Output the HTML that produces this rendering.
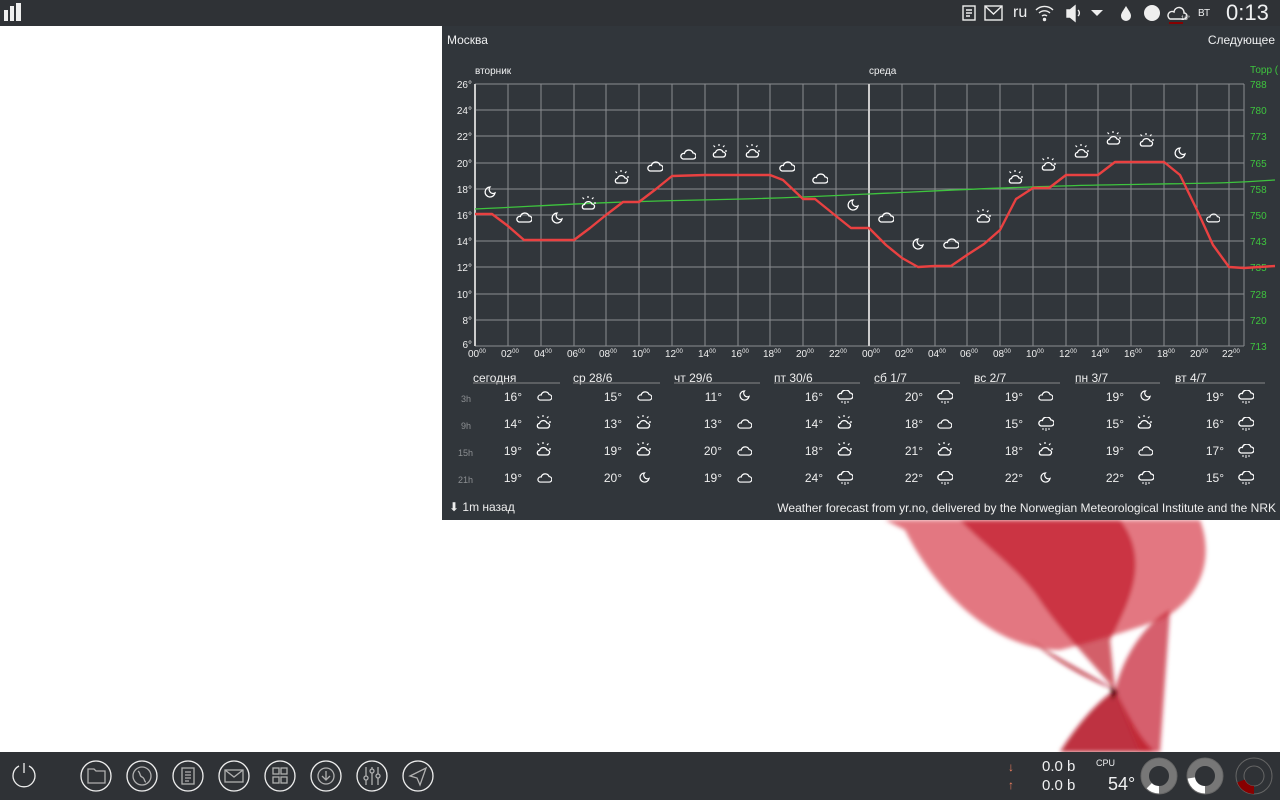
<!DOCTYPE html>
<html><head><meta charset="utf-8">
<style>
*{margin:0;padding:0;box-sizing:border-box}
body{width:1280px;height:800px;overflow:hidden;background:#fff;font-family:"Liberation Sans","DejaVu Sans",sans-serif;position:relative;color:#eff0f1}
.bar{position:absolute;left:0;width:1280px;background:#2f3236}
#top{top:0;height:26px}
#bot{top:752px;height:48px}
#panel{position:absolute;left:442px;top:26px;width:838px;height:494px;background:#31363b}
.t{position:absolute;white-space:nowrap}
</style></head><body>
<svg width="1280" height="800" style="position:absolute;left:0;top:0">
 <defs><filter id="bl"><feGaussianBlur stdDeviation="2"/></filter></defs>
 <g filter="url(#bl)">
  <path d="M885 520L1200 520C1215 560 1200 600 1160 620C1130 630 1100 640 1060 650C1000 650 940 600 905 530Z" fill="#d94a55" opacity=".75"/>
  <path d="M960 520L1120 520C1150 560 1130 600 1110 640L1115 690C1090 660 1060 630 1040 600C1020 570 990 550 960 520Z" fill="#c01a2a" opacity=".7"/>
  <path d="M1030 640C1060 660 1100 680 1115 690C1130 720 1140 740 1155 752L1060 752C1080 720 1100 700 1115 690C1090 680 1060 665 1030 640Z" fill="#b3111f" opacity=".85"/>
  <path d="M1115 690C1125 650 1150 620 1170 610L1160 752L1140 752Z" fill="#c52030" opacity=".7"/>
  <path d="M1110 685L1118 692L1112 700Z" fill="#300" opacity=".8"/>
 </g>
</svg>

<div id="top" class="bar">
 <svg width="20" height="20" style="position:absolute;left:3px;top:3px"><rect x="1" y="7" width="4" height="11" fill="#eee"/><rect x="7" y="3" width="4" height="15" fill="#eee"/><rect x="13" y="0" width="5" height="18" fill="#eee"/></svg>
 <svg width="260" height="26" style="position:absolute;left:960px;top:0" fill="none" stroke="#eee" stroke-width="1.4">
  <rect x="3" y="6" width="12" height="14"/><path d="M6 10h6M6 13h6M6 16h4"/>
  <rect x="25" y="6" width="17" height="14"/><path d="M25 6l8.5 8 8.5-8"/>
  <path d="M76 10a12 12 0 0 1 17 0M79 13a8 8 0 0 1 11 0M82 16a4 4 0 0 1 5 0"/><circle cx="84.5" cy="19.5" r="1" fill="#eee"/>
  <path d="M107 10h3l5-4v15l-5-4h-3z" fill="#eee"/><path d="M118 10a4 4 0 0 1 0 6"/>
  <path d="M131 10h12l-6 6z" fill="#eee" stroke="none"/>
  <path d="M166 6c-3 5-5 7-5 10a5 5 0 0 0 10 0c0-3-2-5-5-10z" fill="#eee" stroke="none"/>
  <circle cx="192" cy="13" r="8" fill="#eee" stroke="none"/>
  <path d="M210 19h14a3 3 0 0 0 0-6a5 5 0 0 0-10-1a4 4 0 0 0-4 7z"/>
  <rect x="209" y="22" width="14" height="2" fill="#800" stroke="none"/>
 </svg>
 <div class="t" style="left:1013px;top:4px;font-size:16px">ru</div>
 <div class="t" style="left:1181px;top:16px;font-size:6px">16°</div>
 <div class="t" style="left:1198px;top:8px;font-size:10px">ВТ</div>
 <div class="t" style="left:1226px;top:0px;font-size:22px;font-weight:300">0:13</div>
</div>

<div id="panel">
 <div class="t" style="left:5px;top:7px;font-size:12px">Москва</div>
 <div class="t" style="right:5px;top:7px;font-size:12px">Следующее</div>
 <div class="t" style="left:33px;top:40px;font-size:10px">вторник</div>
 <div class="t" style="left:427px;top:40px;font-size:10px">среда</div>
 <div class="t" style="left:808px;top:39px;font-size:10px;color:#3ec43e">Торр (</div>
</div>

<svg width="1280" height="800" style="position:absolute;left:0;top:0" font-family="Liberation Sans,sans-serif">
 <g stroke="#8a8d90" stroke-width="1">
  <path d="M475 84H1244M475 110H1244M475 136H1244M475 163H1244M475 189H1244M475 215H1244M475 241H1244M475 267H1244M475 294H1244M475 320H1244M475 346H1244"/>
  <path d="M508 84V346M541 84V346M574 84V346M606 84V346M639 84V346M672 84V346M705 84V346M738 84V346M770 84V346M803 84V346M836 84V346M902 84V346M935 84V346M967 84V346M1000 84V346M1033 84V346M1066 84V346M1098 84V346M1131 84V346M1164 84V346M1197 84V346M1229 84V346M1244 84V346"/>
 </g>
 <path d="M475 84V346M869 84V346" stroke="#ccc" stroke-width="2"/>
 <g font-size="10" fill="#eee" text-anchor="end">
  <text x="472" y="88">26°</text><text x="472" y="114">24°</text><text x="472" y="140">22°</text><text x="472" y="167">20°</text><text x="472" y="193">18°</text><text x="472" y="219">16°</text><text x="472" y="245">14°</text><text x="472" y="271">12°</text><text x="472" y="298">10°</text><text x="472" y="324">8°</text><text x="472" y="348">6°</text>
 </g>
 <g font-size="10" fill="#3ec43e">
  <text x="1250" y="88">788</text><text x="1250" y="114">780</text><text x="1250" y="140">773</text><text x="1250" y="167">765</text><text x="1250" y="193">758</text><text x="1250" y="219">750</text><text x="1250" y="245">743</text><text x="1250" y="271">735</text><text x="1250" y="298">728</text><text x="1250" y="324">720</text><text x="1250" y="350">713</text>
 </g>
 <g font-size="10" fill="#eee">
  <text x="468" y="357">00<tspan font-size="6" dy="-4">00</tspan></text><text x="501" y="357">02<tspan font-size="6" dy="-4">00</tspan></text><text x="534" y="357">04<tspan font-size="6" dy="-4">00</tspan></text><text x="567" y="357">06<tspan font-size="6" dy="-4">00</tspan></text><text x="599" y="357">08<tspan font-size="6" dy="-4">00</tspan></text><text x="632" y="357">10<tspan font-size="6" dy="-4">00</tspan></text><text x="665" y="357">12<tspan font-size="6" dy="-4">00</tspan></text><text x="698" y="357">14<tspan font-size="6" dy="-4">00</tspan></text><text x="731" y="357">16<tspan font-size="6" dy="-4">00</tspan></text><text x="763" y="357">18<tspan font-size="6" dy="-4">00</tspan></text><text x="796" y="357">20<tspan font-size="6" dy="-4">00</tspan></text><text x="829" y="357">22<tspan font-size="6" dy="-4">00</tspan></text>
  <text x="862" y="357">00<tspan font-size="6" dy="-4">00</tspan></text><text x="895" y="357">02<tspan font-size="6" dy="-4">00</tspan></text><text x="928" y="357">04<tspan font-size="6" dy="-4">00</tspan></text><text x="960" y="357">06<tspan font-size="6" dy="-4">00</tspan></text><text x="993" y="357">08<tspan font-size="6" dy="-4">00</tspan></text><text x="1026" y="357">10<tspan font-size="6" dy="-4">00</tspan></text><text x="1059" y="357">12<tspan font-size="6" dy="-4">00</tspan></text><text x="1091" y="357">14<tspan font-size="6" dy="-4">00</tspan></text><text x="1124" y="357">16<tspan font-size="6" dy="-4">00</tspan></text><text x="1157" y="357">18<tspan font-size="6" dy="-4">00</tspan></text><text x="1190" y="357">20<tspan font-size="6" dy="-4">00</tspan></text><text x="1222" y="357">22<tspan font-size="6" dy="-4">00</tspan></text>
 </g>
 <path d="M475 209C560 205 600 202 700 200S820 196 869 194S1000 187 1100 185S1220 184 1275 180" fill="none" stroke="#3ec43e" stroke-width="1.3"/>
 <path d="M475 214L492 214L508 226L524 240L541 240L557 240L574 240L590 228L606 215L623 202L639 202L656 189L672 176L705 175L770 175L783 180L803 199L815 199L836 216L851 228L869 228L886 245L902 258L918 267L935 266L951 266L967 255L984 244L1000 230L1016 199L1033 188L1049 188L1066 175L1098 175L1115 162L1164 162L1180 175L1197 210L1213 245L1229 267L1244 268L1275 266" fill="none" stroke="#e94141" stroke-width="2.4" stroke-linejoin="round"/>
 <defs>
  <symbol id="cl" viewBox="0 0 16 12"><path d="M3 11h10a3 3 0 0 0 0-6a4.5 4.5 0 0 0-8.6 0.5A2.8 2.8 0 0 0 3 11z" fill="none" stroke="#fff" stroke-width="1.3"/></symbol>
  <symbol id="ps" viewBox="0 0 16 14"><path d="M7 2V0M11 3l1.5-1.5M13 7h2M3 3L1.5 1.5" stroke="#fff" stroke-width="1.2"/><path d="M3 13h8a2.5 2.5 0 0 0 0-5a4 4 0 0 0-7.5 0.5A2.3 2.3 0 0 0 3 13z" fill="none" stroke="#fff" stroke-width="1.3"/></symbol>
  <symbol id="mn" viewBox="0 0 12 12"><path d="M6 1a5 5 0 1 0 5 6a4 4 0 0 1-5-6z" fill="none" stroke="#fff" stroke-width="1.3"/></symbol>
  <symbol id="rn" viewBox="0 0 16 14"><path d="M3 9h10a3 3 0 0 0 0-6a4.5 4.5 0 0 0-8.6 0.5A2.8 2.8 0 0 0 3 9z" fill="none" stroke="#fff" stroke-width="1.3"/><path d="M5 11v2M8 11v3M11 11v2" stroke="#fff" stroke-width="1"/></symbol>
 </defs>
 <use href="#mn" x="484" y="186" width="12" height="12"/>
 <use href="#cl" x="516" y="211" width="16" height="12"/>
 <use href="#mn" x="551" y="212" width="12" height="12"/>
 <use href="#ps" x="581" y="196" width="16" height="14"/>
 <use href="#ps" x="614" y="170" width="16" height="14"/>
 <use href="#cl" x="647" y="160" width="16" height="12"/>
 <use href="#cl" x="680" y="148" width="16" height="12"/>
 <use href="#ps" x="712" y="144" width="16" height="14"/>
 <use href="#ps" x="745" y="144" width="16" height="14"/>
 <use href="#cl" x="779" y="160" width="16" height="12"/>
 <use href="#cl" x="812" y="172" width="16" height="12"/>
 <use href="#mn" x="847" y="199" width="12" height="12"/>
 <use href="#cl" x="878" y="211" width="16" height="12"/>
 <use href="#mn" x="912" y="238" width="12" height="12"/>
 <use href="#cl" x="943" y="237" width="16" height="12"/>
 <use href="#ps" x="976" y="209" width="16" height="14"/>
 <use href="#ps" x="1008" y="170" width="16" height="14"/>
 <use href="#ps" x="1041" y="157" width="16" height="14"/>
 <use href="#ps" x="1074" y="144" width="16" height="14"/>
 <use href="#ps" x="1106" y="131" width="16" height="14"/>
 <use href="#ps" x="1139" y="133" width="16" height="14"/>
 <use href="#mn" x="1174" y="147" width="12" height="12"/>
 <use href="#cl" x="1206" y="212" width="14" height="11"/>

 <g font-size="12" fill="#eee">
  <text x="473" y="382">сегодня</text><text x="573" y="382">ср 28/6</text><text x="674" y="382">чт 29/6</text><text x="774" y="382">пт 30/6</text><text x="874" y="382">сб 1/7</text><text x="974" y="382">вс 2/7</text><text x="1075" y="382">пн 3/7</text><text x="1175" y="382">вт 4/7</text>
 </g>
 <g stroke="#888" stroke-width="1"><path d="M473 383H560M573 383H660M674 383H760M774 383H860M874 383H960M974 383H1060M1075 383H1160M1175 383H1265"/></g>
 <g font-size="9" fill="#8c8f92"><text x="461" y="402">3h</text><text x="461" y="429">9h</text><text x="458" y="456">15h</text><text x="458" y="483">21h</text></g>
 <g font-size="12" fill="#eee" text-anchor="end">
  <text x="522" y="401">16°</text><text x="522" y="428">14°</text><text x="522" y="455">19°</text><text x="522" y="482">19°</text>
  <text x="622" y="401">15°</text><text x="622" y="428">13°</text><text x="622" y="455">19°</text><text x="622" y="482">20°</text>
  <text x="722" y="401">11°</text><text x="722" y="428">13°</text><text x="722" y="455">20°</text><text x="722" y="482">19°</text>
  <text x="823" y="401">16°</text><text x="823" y="428">14°</text><text x="823" y="455">18°</text><text x="823" y="482">24°</text>
  <text x="923" y="401">20°</text><text x="923" y="428">18°</text><text x="923" y="455">21°</text><text x="923" y="482">22°</text>
  <text x="1023" y="401">19°</text><text x="1023" y="428">15°</text><text x="1023" y="455">18°</text><text x="1023" y="482">22°</text>
  <text x="1124" y="401">19°</text><text x="1124" y="428">15°</text><text x="1124" y="455">19°</text><text x="1124" y="482">22°</text>
  <text x="1224" y="401">19°</text><text x="1224" y="428">16°</text><text x="1224" y="455">17°</text><text x="1224" y="482">15°</text>
 </g>
 <use href="#cl" x="537" y="390" width="15" height="11"/><use href="#ps" x="536" y="415" width="16" height="14"/><use href="#ps" x="536" y="442" width="16" height="14"/><use href="#cl" x="537" y="472" width="15" height="11"/>
 <use href="#cl" x="637" y="390" width="15" height="11"/><use href="#ps" x="636" y="415" width="16" height="14"/><use href="#ps" x="636" y="442" width="16" height="14"/><use href="#mn" x="639" y="472" width="11" height="11"/>
 <use href="#mn" x="739" y="390" width="11" height="11"/><use href="#cl" x="737" y="418" width="15" height="11"/><use href="#cl" x="737" y="445" width="15" height="11"/><use href="#cl" x="737" y="472" width="15" height="11"/>
 <use href="#rn" x="837" y="390" width="16" height="14"/><use href="#ps" x="837" y="415" width="16" height="14"/><use href="#ps" x="837" y="442" width="16" height="14"/><use href="#rn" x="837" y="471" width="16" height="14"/>
 <use href="#rn" x="937" y="390" width="16" height="14"/><use href="#cl" x="937" y="418" width="15" height="11"/><use href="#ps" x="937" y="442" width="16" height="14"/><use href="#rn" x="937" y="471" width="16" height="14"/>
 <use href="#cl" x="1038" y="390" width="15" height="11"/><use href="#rn" x="1038" y="417" width="16" height="14"/><use href="#ps" x="1038" y="442" width="16" height="14"/><use href="#mn" x="1040" y="472" width="11" height="11"/>
 <use href="#mn" x="1140" y="390" width="11" height="11"/><use href="#ps" x="1137" y="415" width="16" height="14"/><use href="#cl" x="1138" y="445" width="15" height="11"/><use href="#rn" x="1138" y="471" width="16" height="14"/>
 <use href="#rn" x="1238" y="390" width="16" height="14"/><use href="#rn" x="1238" y="417" width="16" height="14"/><use href="#rn" x="1238" y="444" width="16" height="14"/><use href="#rn" x="1238" y="471" width="16" height="14"/>
 <text x="449" y="511" font-size="12" fill="#eee">⬇ 1m назад</text>
 <text x="1276" y="512" font-size="12" fill="#eee" text-anchor="end">Weather forecast from yr.no, delivered by the Norwegian Meteorological Institute and the NRK</text>
</svg>

<div id="bot" class="bar">
 <svg width="1280" height="48" style="position:absolute;left:0;top:0" fill="none" stroke-width="1.3">
  <g stroke="#eee"><path d="M19 14a11 11 0 1 0 10 0"/><path d="M24 11v10"/>
  <circle cx="96" cy="24" r="15"/><circle cx="142" cy="24" r="15"/><circle cx="188" cy="24" r="15"/><circle cx="234" cy="24" r="15"/><circle cx="280" cy="24" r="15"/><circle cx="326" cy="24" r="15"/><circle cx="372" cy="24" r="15"/><circle cx="418" cy="24" r="15"/></g>
  <g stroke="#b0b0b0">
  <path d="M88 17h6l2 2h9v12H88z"/>
  <circle cx="142" cy="24" r="9"/><path d="M138 19c3 2 1 5 4 6s2 5 4 5"/>
  <rect x="182" y="16" width="12" height="16"/><path d="M185 20h6M185 23h6M185 26h6M185 29h4"/>
  <rect x="225" y="18" width="18" height="12"/><path d="M225 18l9 7 9-7"/>
  <rect x="273" y="16" width="6" height="6"/><rect x="281" y="16" width="6" height="6"/><rect x="273" y="25" width="6" height="6"/><rect x="281" y="25" width="6" height="6"/>
  <circle cx="326" cy="24" r="8"/><path d="M326 19v9M322 24l4 4 4-4"/>
  <path d="M366 15v18M372 15v18M378 15v18"/><circle cx="366" cy="26" r="2" fill="#31363b"/><circle cx="372" cy="19" r="2" fill="#31363b"/><circle cx="378" cy="24" r="2" fill="#31363b"/>
  <path d="M410 24l16-8-6 17-3-7z"/></g>
 </svg>
 <div class="t" style="left:1008px;top:8px;font-size:12px;color:#f08060">↓</div>
 <div class="t" style="left:1008px;top:26px;font-size:12px;color:#f08060">↑</div>
 <div class="t" style="left:1042px;top:6px;font-size:15px">0.0 b</div>
 <div class="t" style="left:1042px;top:25px;font-size:15px">0.0 b</div>
 <div class="t" style="left:1096px;top:6px;font-size:9px">CPU</div>
 <div class="t" style="left:1108px;top:22px;font-size:18px">54°</div>
 <svg width="140" height="48" style="position:absolute;left:1140px;top:0">
  <circle cx="19" cy="24" r="14" fill="none" stroke="#777" stroke-width="8"/><path d="M19 38a14 14 0 0 1-10-4" stroke="#fff" stroke-width="8" fill="none"/><circle cx="19" cy="24" r="18" fill="none" stroke="#666" stroke-width="1"/>
  <circle cx="65" cy="24" r="14" fill="none" stroke="#777" stroke-width="8"/><path d="M65 38a14 14 0 0 1-14-12" stroke="#fff" stroke-width="8" fill="none"/><circle cx="65" cy="24" r="18" fill="none" stroke="#666" stroke-width="1"/>
  <circle cx="114" cy="24" r="18" fill="none" stroke="#666" stroke-width="1"/><circle cx="114" cy="24" r="10" fill="none" stroke="#666" stroke-width="1"/><path d="M114 38a14 14 0 0 1-13-9" stroke="#800" stroke-width="8" fill="none"/>
 </svg>
</div>
</body></html>
